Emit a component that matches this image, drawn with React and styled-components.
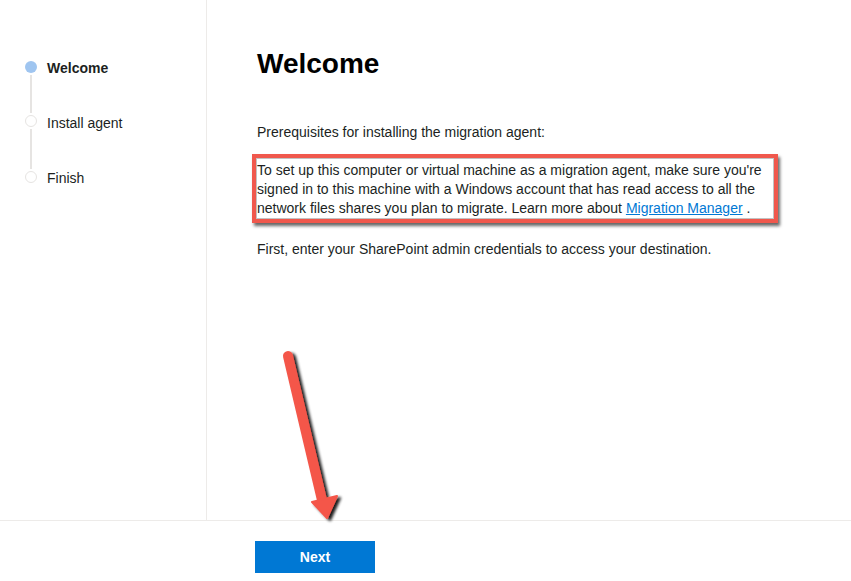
import React from "react";
import styled, { createGlobalStyle } from "styled-components";

const Global = createGlobalStyle`
  html, body { margin: 0; padding: 0; background: #fff; }
  body { font-family: "Liberation Sans", Arial, sans-serif; color: #201f1e; }
  #root { height: 100vh; }
`;

const Page = styled.div`
  position: relative;
  height: 581px;
  display: flex;
  flex-direction: column;
  overflow: hidden;
`;

const Body = styled.div`
  height: 521px;
  display: flex;
  border-bottom: 1px solid #edebe9;
  box-sizing: border-box;
`;

const Sidebar = styled.nav`
  width: 207px;
  box-sizing: border-box;
  border-right: 1px solid #edebe9;
  padding: 61px 0 0 25px;
  display: flex;
  flex-direction: column;
`;

const Step = styled.div`
  display: flex;
  align-items: flex-start;
  gap: 10px;
  height: ${(p) => p.$h}px;
`;

const Marker = styled.div`
  width: 12px;
  display: flex;
  flex-direction: column;
  align-items: center;
  height: 100%;
`;

const Dot = styled.div`
  width: 12px;
  height: 12px;
  box-sizing: border-box;
  border-radius: 50%;
  background: ${(p) => (p.$active ? "#9fc5f0" : "#fff")};
  border: ${(p) => (p.$active ? "none" : "1.5px solid #e6e4e2")};
  flex: none;
`;

const Connector = styled.div`
  width: 2px;
  flex: 1;
  background: #e6e4e2;
  margin: 2px 0;
`;

const StepLabel = styled.span`
  font-size: 14px;
  line-height: 14px;
  font-weight: ${(p) => (p.$active ? 700 : 400)};
  color: #201f1e;
  margin-top: ${(p) => p.$mt || 0}px;
`;

const Content = styled.main`
  flex: 1;
  padding: 46px 0 0 50px;
  display: flex;
  flex-direction: column;
`;

const Title = styled.h1`
  margin: 0;
  font-size: 28px;
  line-height: 36px;
  font-weight: 700;
  color: #000;
`;

const Text = styled.p`
  margin: ${(p) => p.$mt || 0}px 0 0 0;
  font-size: 14px;
  line-height: 19px;
  color: #201f1e;
`;

const Highlight = styled.p`
  margin: 12px 0 0 -5px;
  width: 526px;
  box-sizing: border-box;
  border: 4px solid #f0584d;
  padding: 3px 0 1px 1px;
  font-size: 14px;
  line-height: 19px;
  color: #201f1e;
  box-shadow: 2px 3px 3px rgba(0, 0, 0, 0.6), inset 0 0 0 1px rgba(80, 80, 80, 0.35);
  white-space: nowrap;
`;

const Link = styled.a`
  color: #0078d4;
  text-decoration: underline;
`;

const Footer = styled.footer`
  flex: 1;
  padding: 20px 0 0 255px;
`;

const PrimaryButton = styled.button`
  width: 120px;
  height: 32px;
  border: none;
  background: #0078d4;
  color: #fff;
  font-family: "Liberation Sans", Arial, sans-serif;
  font-size: 14px;
  font-weight: 700;
  cursor: pointer;
`;

const ArrowOverlay = styled.svg`
  position: absolute;
  left: 270px;
  top: 340px;
  width: 90px;
  height: 200px;
  pointer-events: none;
`;

const steps = [
  { label: "Welcome", active: true, h: 54 },
  { label: "Install agent", h: 56, mt: 1 },
  { label: "Finish", last: true, h: 20 },
];

export default function App() {
  return (
    <Page>
      <Global />
      <Body>
        <Sidebar>
          {steps.map((s) => (
            <Step key={s.label} $h={s.h}>
              <Marker>
                <Dot $active={s.active} />
                {!s.last && <Connector />}
              </Marker>
              <StepLabel $active={s.active} $mt={s.mt}>{s.label}</StepLabel>
            </Step>
          ))}
        </Sidebar>
        <Content>
          <Title>Welcome</Title>
          <Text $mt={41}>Prerequisites for installing the migration agent:</Text>
          <Highlight>
            To set up this computer or virtual machine as a migration agent, make sure you're
            <br />
            signed in to this machine with a Windows account that has read access to all the
            <br />
            network files shares you plan to migrate. Learn more about{" "}
            <Link href="#">Migration Manager</Link> .
          </Highlight>
          <Text $mt={17}>First, enter your SharePoint admin credentials to access your destination.</Text>
        </Content>
      </Body>
      <Footer>
        <PrimaryButton>Next</PrimaryButton>
      </Footer>
      <ArrowOverlay viewBox="270 340 90 200">
        <defs>
          <filter id="sh" x="-50%" y="-20%" width="200%" height="140%">
            <feGaussianBlur in="SourceAlpha" stdDeviation="1.6" />
            <feOffset dx="3" dy="2" result="b" />
            <feComponentTransfer>
              <feFuncA type="linear" slope="0.9" />
            </feComponentTransfer>
            <feMerge>
              <feMergeNode />
              <feMergeNode in="SourceGraphic" />
            </feMerge>
          </filter>
        </defs>
        <g filter="url(#sh)" fill="#f4564a" stroke="#f4564a">
          <line x1="288" y1="356" x2="322" y2="500" strokeWidth="10" strokeLinecap="round" />
          <polygon points="312,502 337,496 327,518" strokeWidth="2" strokeLinejoin="round" />
        </g>
      </ArrowOverlay>
    </Page>
  );
}
